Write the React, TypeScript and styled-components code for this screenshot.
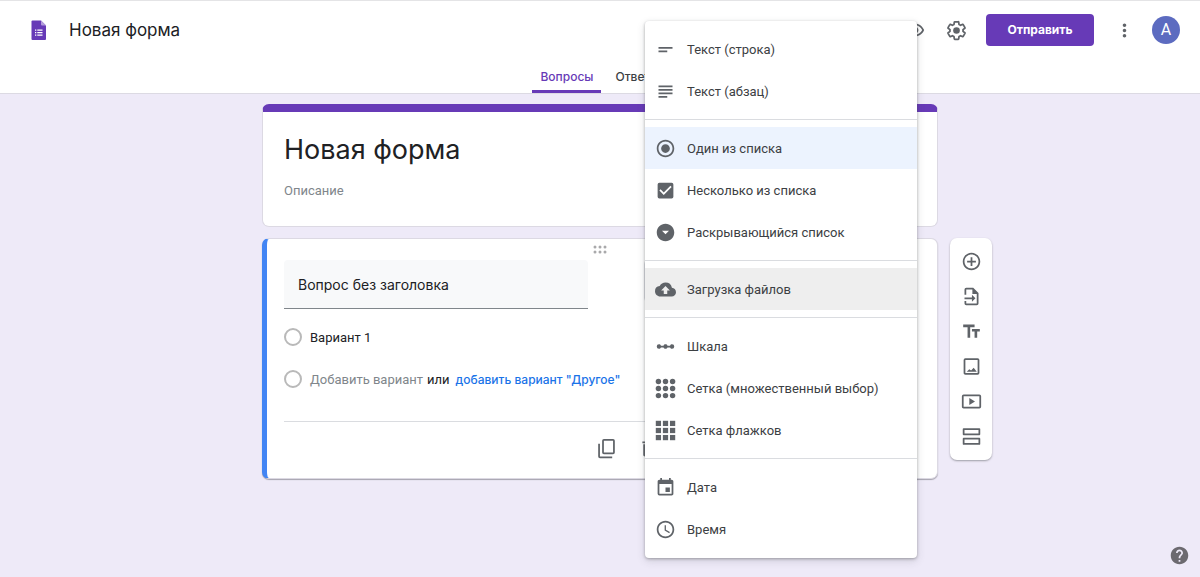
import React from "react";
import styled, { createGlobalStyle, css } from "styled-components";
import {
  MdAccessTime,
  MdAddCircleOutline,
  MdArrowDropDownCircle,
  MdCheckBox,
  MdCloudUpload,
  MdDeleteOutline,
  MdEvent,
  MdHelp,
  MdLinearScale,
  MdMoreVert,
  MdOutlineVisibility,
  MdRadioButtonChecked,
  MdShortText,
  MdSubject,
  MdTextFields,
} from "react-icons/md";

const purple = "#673ab7";
const iconGrey = "#5f6368";
const ink = "#202124";
const display = `Inter, "Noto Sans", sans-serif`;
const body = `Roboto, "Liberation Sans", sans-serif`;

const GlobalStyle = createGlobalStyle`
  *, *::before, *::after { box-sizing: border-box; }
  body {
    margin: 0;
    background: #eeeaf8;
    color: ${ink};
    font-family: ${body};
    font-size: 13px;
  }
  button, input, select { font: inherit; color: inherit; }
`;

const Page = styled.div`
  position: relative;
  display: flex;
  flex-direction: column;
  min-height: 100vh;
`;

const Header = styled.header`
  background: #fff;
  border-top: 1px solid #e4e4e6;
  border-bottom: 1px solid #dcdae3;
`;

const TopBar = styled.div`
  display: flex;
  align-items: center;
  height: 58px;
  padding: 0 20px 0 28px;
`;

const FormName = styled.span`
  margin-left: 20px;
  font-family: ${display};
  font-size: 17px;
  line-height: 24px;
`;

const Actions = styled.div`
  display: flex;
  align-items: center;
  margin-left: auto;
`;

const IconButton = styled.button`
  display: flex;
  align-items: center;
  justify-content: center;
  width: 42px;
  height: 35px;
  padding: 0;
  border: 0;
  background: none;
  color: ${iconGrey};
`;

const SendButton = styled.button`
  width: 108px;
  height: 32px;
  margin: 0 9px;
  padding: 0 0 1px;
  border: 0;
  border-radius: 4px;
  background: ${purple};
  color: #fff;
  font-family: ${display};
  font-size: 12px;
  font-weight: 700;
`;

const Avatar = styled.button`
  width: 28px;
  height: 28px;
  margin-left: 7px;
  padding: 0;
  border: 0;
  border-radius: 50%;
  background: #5c6bc0;
  color: #fff;
  font-size: 16px;
  line-height: 28px;
`;

const Tabs = styled.nav`
  display: flex;
  justify-content: center;
  gap: 6px;
`;

const Tab = styled.a<{ $active?: boolean }>`
  height: 34px;
  padding: 0 8px;
  border-bottom: 3px solid ${(p) => (p.$active ? purple : "transparent")};
  border-radius: 2px 2px 0 0;
  color: ${(p) => (p.$active ? purple : "#3c4043")};
  font-family: ${display};
  font-size: 12px;
  font-weight: 500;
  line-height: 36px;
  text-decoration: none;
`;

const Workspace = styled.main`
  display: grid;
  grid-template-columns: 1fr minmax(0, 676px) 1fr;
  gap: 11px 12px;
  padding: 10px 0 40px;
`;

const card = css`
  background: #fff;
  border: 1px solid #dcd9e3;
  border-radius: 7px;
`;

const TitleCard = styled.section`
  ${card}
  grid-column: 2;
  border-top: 8px solid ${purple};
  padding: 18px 21px 26px;
`;

const FormTitle = styled.h1`
  margin: 0;
  font-family: ${display};
  font-size: 27px;
  font-weight: 400;
  line-height: 40px;
`;

const Description = styled.p`
  margin: 12px 0 0;
  color: #80868b;
  line-height: 18px;
`;

const QuestionCard = styled.section`
  ${card}
  grid-column: 2;
  padding: 0 21px 12px 17px;
  border-left: 5px solid #4285f4;
  box-shadow: 0 1px 1px #a5a2ad;
`;

const DragHandle = styled.div`
  display: flex;
  justify-content: center;
  height: 21px;
  padding-top: 6px;
`;

const QuestionRow = styled.div`
  display: flex;
  justify-content: space-between;
  align-items: flex-start;
`;

const QuestionInput = styled.input`
  width: 304px;
  height: 49px;
  padding: 0 14px;
  border: 0;
  border-bottom: 1px solid #80868b;
  border-radius: 4px 4px 0 0;
  background: #f8f9fa;
  font-family: ${display};
  font-size: 14px;
`;

const TypeField = styled.div`
  position: relative;
  width: 272px;
`;

const TypeSelect = styled.select`
  width: 100%;
  height: 42px;
  padding: 0 12px;
  border: 1px solid #dadce0;
  border-radius: 4px;
  background: #fff;
`;

const Menu = styled.div`
  position: absolute;
  z-index: 2;
  top: -239px;
  left: 1px;
  width: 272px;
  padding: 7px 0 8px;
  border-radius: 4px;
  background: #fff;
  box-shadow: 0 1px 3px rgba(60, 64, 67, 0.4), 0 3px 8px rgba(60, 64, 67, 0.16);
`;

const MenuItem = styled.button<{ $tone?: string }>`
  display: flex;
  align-items: center;
  gap: 11px;
  width: 100%;
  height: 42px;
  padding: 0 10px;
  border: 0;
  background: ${(p) => p.$tone ?? "transparent"};
  color: #3c4043;
  text-align: left;

  svg {
    flex: none;
    color: ${iconGrey};
  }
`;

const MenuDivider = styled.hr`
  height: 1px;
  margin: 7px 0;
  border: 0;
  background: #dadce0;
`;

const Options = styled.div`
  padding: 7px 0 21px;
`;

const Option = styled.div`
  display: flex;
  align-items: center;
  height: 42px;
`;

const Radio = styled.input`
  appearance: none;
  width: 18px;
  height: 18px;
  margin: 0 8px 0 0;
  border: 2px solid #b9b9b9;
  border-radius: 50%;
`;

const AddOption = styled.button`
  padding: 0;
  border: 0;
  background: none;
  color: #80868b;
`;

const OrText = styled.span`
  margin: 0 6px 0 4px;
`;

const AddOther = styled.button`
  padding: 0;
  border: 0;
  background: none;
  color: #1a73e8;
  font-family: ${display};
  font-size: 12px;
  font-weight: 500;
`;

const CardFooter = styled.footer`
  display: flex;
  padding: 9px 0 0 301px;
  border-top: 1px solid #dadce0;
`;

const SideBar = styled.aside`
  grid-column: 3;
  grid-row: 2;
  align-self: start;
  display: flex;
  flex-direction: column;
  align-items: center;
  width: 42px;
  padding: 6px 0;
  border-radius: 7px;
  background: #fff;
  box-shadow: 0 1px 2px rgba(60, 64, 67, 0.45);
`;

const HelpButton = styled(IconButton)`
  position: absolute;
  right: 0;
  bottom: 4px;
  color: #6c6a70;
`;

const Svg = ({ children }: { children: React.ReactNode }) => (
  <svg width="21" height="21" viewBox="0 0 24 24" fill="currentColor" aria-hidden="true">
    {children}
  </svg>
);

const FormsLogo = () => (
  <svg width="21" height="21" viewBox="0 0 21 21" aria-hidden="true">
    <path d="M4.500.5h8.500l5 5v13.500a1 1 0 0 1-1 1h-12.500a1 1 0 0 1-1-1v-17.500a1 1 0 0 1 1-1z" fill={purple} />
    <path d="M13 .5l5 5h-4a1 1 0 0 1-1-1z" fill="#b39ddb" />
    <path d="M7 9.500h1.300v1.300H7zm2.300 0h5.200v1.300H9.300zM7 12h1.300v1.300H7zm2.300 0h5.200v1.300H9.300zM7 14.500h1.300v1.300H7zm2.300 0h5.200v1.300H9.300z" fill="#fff" />
  </svg>
);

const GearIcon = () => (
  <Svg>
    <path
      fill="none"
      stroke="currentColor"
      strokeWidth="2"
      strokeLinejoin="round"
      d="M19.430 12.980c.04-.32.07-.64.07-.98 0-.34-.03-.66-.07-.98l2.110-1.650c.19-.15.24-.42.12-.64l-2-3.460a.5.5 0 0 0-.61-.22l-2.490 1c-.52-.4-1.080-.73-1.690-.98l-.38-2.650A.488.488 0 0 0 14 2h-4c-.25 0-.46.18-.49.42l-.38 2.650c-.61.25-1.170.59-1.690.98l-2.490-1c-.23-.08-.49 0-.61.22l-2 3.460c-.13.22-.07.49.12.64l2.110 1.650c-.04.32-.07.65-.07.98 0 .33.03.66.07.98l-2.110 1.650c-.19.15-.24.42-.12.64l2 3.460c.12.22.38.3.61.22l2.490-1c.52.4 1.080.73 1.690.98l.38 2.650c.03.24.24.42.49.42h4c.25 0 .46-.18.49-.42l.38-2.650c.61-.25 1.170-.59 1.690-.98l2.490 1c.23.08.49 0 .61-.22l2-3.460c.12-.22.07-.49-.12-.64z"
    />
    <circle cx="12" cy="12" r="3.800" />
  </Svg>
);

const CopyIcon = () => (
  <Svg>
    <path d="M19.500 1h-10.500a2 2 0 0 0-2 2v13.500a2 2 0 0 0 2 2h10.500a2 2 0 0 0 2-2V3a2 2 0 0 0-2-2zm0 15.500H9V3h10.500zM4.500 6.500h-2v14.500a2 2 0 0 0 2 2h14v-2h-14z" />
  </Svg>
);

const spots = [3.900, 12, 20.100];

const DotGridIcon = () => (
  <Svg>
    {spots.flatMap((y) => spots.map((x) => <circle key={`${x}-${y}`} cx={x} cy={y} r="3.100" />))}
  </Svg>
);

const SquareGridIcon = () => (
  <Svg>
    {spots.flatMap((y) =>
      spots.map((x) => <rect key={`${x}-${y}`} x={x - 3} y={y - 3} width="6" height="6" />)
    )}
  </Svg>
);

const ImportIcon = () => (
  <Svg>
    <path d="M14 2H6a2 2 0 0 0-2 2v6h2V4h7v5h5v11H6v-3H4v3a2 2 0 0 0 2 2h12a2 2 0 0 0 2-2V8zM12.500 18l4-4-4-4v3H4v2h8.500z" />
  </Svg>
);

const ImageIcon = () => (
  <Svg>
    <path d="M19 4.500v15H5v-15h14m0-2H5a2 2 0 0 0-2 2v15c0 1.100.9 2 2 2h14a2 2 0 0 0 2-2v-15a2 2 0 0 0-2-2z" />
    <path d="M14.500 13.500l-3 3-2-1.500L6.500 18h11.500z" />
  </Svg>
);

const VideoIcon = () => (
  <Svg>
    <path d="M21 6v12H3V6h18m0-2H3a2 2 0 0 0-2 2v12c0 1.100.9 2 2 2h18a2 2 0 0 0 2-2V6a2 2 0 0 0-2-2z" />
    <path d="M9.500 8v8l6.500-4z" />
  </Svg>
);

const SectionIcon = () => (
  <Svg>
    <path d="M20 4.500v4H4v-4h16m1-2H3c-.6 0-1 .4-1 1v6c0 .6.4 1 1 1h18c.6 0 1-.4 1-1v-6c0-.6-.4-1-1-1zM20 15.500v4H4v-4h16m1-2H3c-.6 0-1 .4-1 1v6c0 .6.4 1 1 1h18c.6 0 1-.4 1-1v-6c0-.6-.4-1-1-1z" />
  </Svg>
);

type Entry = { label: string; icon: React.ReactNode; tone?: string };

const groups: Entry[][] = [
  [
    { label: "Текст (строка)", icon: <MdShortText size={21} /> },
    { label: "Текст (абзац)", icon: <MdSubject size={21} /> },
  ],
  [
    { label: "Один из списка", icon: <MdRadioButtonChecked size={21} />, tone: "#ecf3fe" },
    { label: "Несколько из списка", icon: <MdCheckBox size={21} /> },
    { label: "Раскрывающийся список", icon: <MdArrowDropDownCircle size={21} /> },
  ],
  [{ label: "Загрузка файлов", icon: <MdCloudUpload size={21} />, tone: "#eeeeee" }],
  [
    { label: "Шкала", icon: <MdLinearScale size={21} /> },
    { label: "Сетка (множественный выбор)", icon: <DotGridIcon /> },
    { label: "Сетка флажков", icon: <SquareGridIcon /> },
  ],
  [
    { label: "Дата", icon: <MdEvent size={21} /> },
    { label: "Время", icon: <MdAccessTime size={21} /> },
  ],
];

const tools = [
  { label: "Добавить вопрос", icon: <MdAddCircleOutline size={21} /> },
  { label: "Импортировать вопросы", icon: <ImportIcon /> },
  { label: "Добавить название и описание", icon: <MdTextFields size={21} /> },
  { label: "Добавить изображение", icon: <ImageIcon /> },
  { label: "Добавить видео", icon: <VideoIcon /> },
  { label: "Добавить раздел", icon: <SectionIcon /> },
];

export default function App() {
  return (
    <Page>
      <GlobalStyle />
      <Header>
        <TopBar>
          <FormsLogo />
          <FormName>Новая форма</FormName>
          <Actions>
            <IconButton aria-label="Просмотр">
              <MdOutlineVisibility size={21} />
            </IconButton>
            <IconButton aria-label="Настройки">
              <GearIcon />
            </IconButton>
            <SendButton>Отправить</SendButton>
            <IconButton aria-label="Ещё">
              <MdMoreVert size={21} />
            </IconButton>
            <Avatar aria-label="Аккаунт">A</Avatar>
          </Actions>
        </TopBar>
        <Tabs>
          <Tab href="#questions" $active>
            Вопросы
          </Tab>
          <Tab href="#responses">Ответы</Tab>
        </Tabs>
      </Header>

      <Workspace>
        <TitleCard>
          <FormTitle>Новая форма</FormTitle>
          <Description>Описание</Description>
        </TitleCard>

        <QuestionCard>
          <DragHandle>
            <svg width="14" height="9" viewBox="0 0 14 9" fill="#a9a9ab" aria-hidden="true">
              {[2, 7].flatMap((y) =>
                [2, 7, 12].map((x) => <circle key={`${x}-${y}`} cx={x} cy={y} r="1.500" />)
              )}
            </svg>
          </DragHandle>
          <QuestionRow>
            <QuestionInput aria-label="Вопрос" defaultValue="Вопрос без заголовка" />
            <TypeField>
              <TypeSelect aria-label="Тип вопроса">
                <option>Один из списка</option>
              </TypeSelect>
              <Menu role="menu">
                {groups.map((group, i) => (
                  <React.Fragment key={i}>
                    {i > 0 && <MenuDivider />}
                    {group.map((entry) => (
                      <MenuItem key={entry.label} role="menuitem" $tone={entry.tone}>
                        {entry.icon}
                        {entry.label}
                      </MenuItem>
                    ))}
                  </React.Fragment>
                ))}
              </Menu>
            </TypeField>
          </QuestionRow>
          <Options>
            <Option>
              <Radio type="radio" id="option-1" name="answer" />
              <label htmlFor="option-1">Вариант 1</label>
            </Option>
            <Option>
              <Radio type="radio" name="answer" aria-label="Новый вариант" />
              <AddOption>Добавить вариант</AddOption>
              <OrText>или</OrText>
              <AddOther>добавить вариант "Другое"</AddOther>
            </Option>
          </Options>
          <CardFooter>
            <IconButton aria-label="Создать копию">
              <CopyIcon />
            </IconButton>
            <IconButton aria-label="Удалить">
              <MdDeleteOutline size={21} />
            </IconButton>
          </CardFooter>
        </QuestionCard>

        <SideBar>
          {tools.map((tool) => (
            <IconButton key={tool.label} aria-label={tool.label}>
              {tool.icon}
            </IconButton>
          ))}
        </SideBar>
      </Workspace>

      <HelpButton aria-label="Справка">
        <MdHelp size={21} />
      </HelpButton>
    </Page>
  );
}
